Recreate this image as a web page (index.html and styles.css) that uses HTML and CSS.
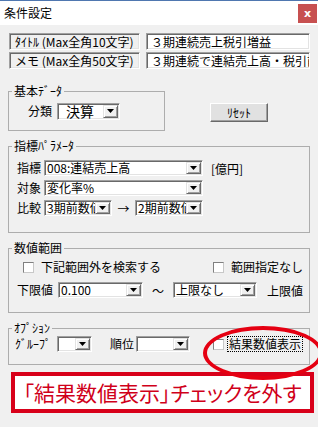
FILE: index.html
```html
<!DOCTYPE html>
<html lang="ja">
<head>
    <meta charset="UTF-8">
    <meta name="viewport" content="width=device-width, initial-scale=1.0">
    <title>条件設定</title>
    <link rel="stylesheet" href="styles.css">
</head>
<body>
<div class="window">
    <!-- Title bar -->
    <div class="titlebar">
        <span class="title">条件設定</span>
        <span class="close">x</span>
    </div>

    <div class="content">
        <!-- Title / memo -->
        <div class="field-row">
            <div class="field-label">ﾀｲﾄﾙ (Max全角10文字)</div>
            <div class="field-input">３期連続売上税引増益</div>
        </div>
        <div class="field-row">
            <div class="field-label">メモ (Max全角50文字)</div>
            <div class="field-input">３期連続で連結売上高・税引前利益が増加</div>
        </div>

        <!-- Basic data -->
        <div class="top-row">
            <fieldset class="group basic">
                <legend>基本ﾃﾞｰﾀ</legend>
                <div class="group-body">
                    <div class="row">
                        <span class="lbl">分類</span>
                        <div class="combo w-kind"><span class="combo-text big">決算</span><span class="combo-btn"></span></div>
                    </div>
                </div>
            </fieldset>
            <button class="reset">ﾘｾｯﾄ</button>
        </div>

        <!-- Index parameters -->
        <fieldset class="group params">
            <legend>指標ﾊﾟﾗﾒｰﾀ</legend>
            <div class="group-body">
                <div class="row">
                    <span class="lbl">指標</span>
                    <div class="combo w-main"><span class="combo-text">008:連結売上高</span><span class="combo-btn"></span></div>
                    <span class="unit">[億円]</span>
                </div>
                <div class="row">
                    <span class="lbl">対象</span>
                    <div class="combo w-main"><span class="combo-text">変化率%</span><span class="combo-btn"></span></div>
                </div>
                <div class="row">
                    <span class="lbl">比較</span>
                    <div class="combo w-small"><span class="combo-text cut">3期前数値</span><span class="combo-btn"></span></div>
                    <span class="arrow">→</span>
                    <div class="combo w-small"><span class="combo-text cut">2期前数値</span><span class="combo-btn"></span></div>
                </div>
            </div>
        </fieldset>

        <!-- Value range -->
        <fieldset class="group range">
            <legend>数値範囲</legend>
            <div class="group-body">
                <div class="check-row">
                    <label class="check-label"><span class="check"></span>下記範囲外を検索する</label>
                    <label class="check-label"><span class="check"></span>範囲指定なし</label>
                </div>
                <div class="row">
                    <span class="lbl lbl-wide">下限値</span>
                    <div class="combo w-lower"><span class="combo-text">0.100</span><span class="combo-btn"></span></div>
                    <span class="tilde">～</span>
                    <div class="combo w-upper"><span class="combo-text">上限なし</span><span class="combo-btn"></span></div>
                    <span class="unit upper">上限値</span>
                </div>
            </div>
        </fieldset>

        <!-- Options -->
        <fieldset class="group options">
            <legend>ｵﾌﾟｼｮﾝ</legend>
            <div class="group-body">
                <div class="row">
                    <span class="lbl lbl-group">ｸﾞﾙｰﾌﾟ</span>
                    <div class="combo w-group"><span class="combo-text"></span><span class="combo-btn"></span></div>
                    <span class="lbl lbl-rank">順位</span>
                    <div class="combo w-rank"><span class="combo-text"></span><span class="combo-btn"></span></div>
                    <label class="check-label result-check"><span class="check"></span><span class="focus">結果数値表示</span></label>
                </div>
            </div>
        </fieldset>

        <!-- Annotation -->
        <div class="note">「結果数値表示」チェックを外す</div>
    </div>
</div>
</body>
</html>
```

FILE: styles.css
```css
/* General */
* {
    box-sizing: border-box;
}

body {
    margin: 0;
    background-color: #f0f0f0;
    font-family: "Noto Sans CJK JP", sans-serif;
    font-size: 12px;
    color: #000;
}

.window {
    width: 318px;
    height: 427px;
    overflow: hidden;
}

/* Title bar */
.titlebar {
    height: 25px;
    background-color: #fff;
    border-top: 1px solid #4f77b0;
    display: flex;
    align-items: center;
    justify-content: space-between;
    padding: 0 1px 0 4px;
}

.title {
    line-height: 14px;
}

.close {
    width: 19px;
    height: 19px;
    background-color: #c75050;
    color: #fff;
    font: bold 11px "DejaVu Sans", sans-serif;
    display: flex;
    align-items: center;
    justify-content: center;
}

.content {
    padding: 8px 8px 0 8px;
}

/* Title / memo rows */
.field-row {
    display: flex;
    gap: 6px;
    height: 17px;
    margin-left: 1px;
}

.field-row + .field-row {
    margin-top: 2px;
}

.field-label,
.field-input {
    border: 1px solid;
    border-color: #a0a0a0 #fff #fff #a0a0a0;
    box-shadow: inset 1px 1px 0 #696969, inset -1px -1px 0 #e3e3e3;
    line-height: 15px;
    white-space: nowrap;
    overflow-x: clip;
}

.field-label {
    width: 131px;
    padding-left: 5px;
}

.field-input {
    width: 164px;
    padding-left: 4px;
    background-color: #fff;
}

/* Group boxes */
.group {
    margin: 0;
    padding: 0;
    border: 1px solid #adadad;
    min-width: 0;
}

.group legend {
    margin-left: 3px;
    padding: 0 2px;
    line-height: 14px;
}

.top-row {
    display: flex;
    align-items: flex-start;
    margin-top: 15px;
}

.basic {
    width: 157px;
}

.basic .group-body {
    padding: 5px 0 11px 19px;
}

.params,
.range,
.options {
    width: 302px;
    margin-top: 8px;
}

.params .group-body {
    padding: 7px 0 16px 8px;
}

.range .group-body {
    padding: 5px 6px 14px 8px;
}

.options .group-body {
    padding: 1px 0 12px 6px;
}

.row {
    display: flex;
    align-items: center;
    height: 16px;
    white-space: nowrap;
}

.row > * {
    flex-shrink: 0;
}

.row + .row {
    margin-top: 4px;
}

.range .row {
    margin-top: 8px;
}

.lbl {
    width: 27px;
    line-height: 14px;
}

.basic .lbl {
    width: 29px;
}

.lbl-wide {
    width: 41px;
}

.lbl-group {
    width: 42px;
}

.lbl-rank {
    width: 25px;
    margin-left: 18px;
}

.unit {
    margin-left: 8px;
}

.unit.upper {
    margin-left: 10px;
}

.arrow {
    width: 23px;
    text-align: center;
}

.tilde {
    width: 30px;
    text-align: center;
}

/* Reset button */
.reset {
    margin: 19px 0 0 45px;
    width: 58px;
    height: 19px;
    padding: 0;
    font: 12px "Noto Sans CJK JP", sans-serif;
    background-color: #e1e1e1;
    border: 1px solid;
    border-color: #fff #696969 #696969 #fff;
    box-shadow: inset -1px -1px 0 #a0a0a0;
}

/* Combo boxes */
.combo {
    display: flex;
    align-items: center;
    height: 16px;
    padding: 1px;
    background-color: #fff;
    border: 1px solid;
    border-color: #a0a0a0 #fff #fff #a0a0a0;
    box-shadow: inset 1px 1px 0 #696969, inset -1px -1px 0 #e3e3e3;
}

.w-kind { width: 63px; height: 17px; }
.w-main { width: 159px; }
.w-small { width: 68px; }
.w-lower { width: 85px; }
.w-upper { width: 84px; }
.w-group { width: 35px; }
.w-rank { width: 54px; margin-left: 1px; }

.combo-text {
    flex: 1;
    min-width: 0;
    padding-left: 1px;
    line-height: 12px;
    white-space: nowrap;
}

.combo-text.cut {
    overflow-x: clip;
}

.combo-text.big {
    font-size: 14px;
    padding-left: 7px;
    line-height: 13px;
}

.combo-btn {
    width: 15px;
    height: 100%;
    flex-shrink: 0;
    background-color: #f0f0f0;
    border: 1px solid;
    border-color: #e3e3e3 #696969 #696969 #e3e3e3;
    box-shadow: inset 1px 1px 0 #fff, inset -1px -1px 0 #a0a0a0;
    display: flex;
    align-items: center;
    justify-content: center;
}

.combo-btn::after {
    content: '';
    width: 7px;
    height: 4px;
    background-color: #000;
    clip-path: polygon(0 0, 100% 0, 50% 100%);
}

/* Check boxes */
.check-row {
    display: flex;
    justify-content: space-between;
    align-items: center;
    height: 14px;
    padding-left: 6px;
    white-space: nowrap;
}

.check-label {
    display: flex;
    align-items: center;
    gap: 7px;
    line-height: 14px;
}

.check {
    width: 11px;
    height: 11px;
    flex-shrink: 0;
    background-color: #fff;
    border: 1px solid;
    border-color: #808080 #c8c8c8 #c8c8c8 #808080;
}

.result-check {
    position: relative;
    margin-left: 23px;
    gap: 4px;
}

.focus {
    outline: 1px dotted #000;
    padding: 0 1px;
}

/* Red annotation */
.result-check::after {
    content: '';
    position: absolute;
    left: -10px;
    top: -11px;
    width: 112px;
    height: 46px;
    border: 4px solid #e50012;
    border-radius: 50%;
}

.note {
    margin: 7px 0 0 3px;
    width: 303px;
    height: 41px;
    background-color: #fff;
    border: 4px solid #d8001a;
    color: #d0001a;
    font-size: 21px;
    font-feature-settings: "palt";
    line-height: 33px;
    text-align: center;
    white-space: nowrap;
}
```
